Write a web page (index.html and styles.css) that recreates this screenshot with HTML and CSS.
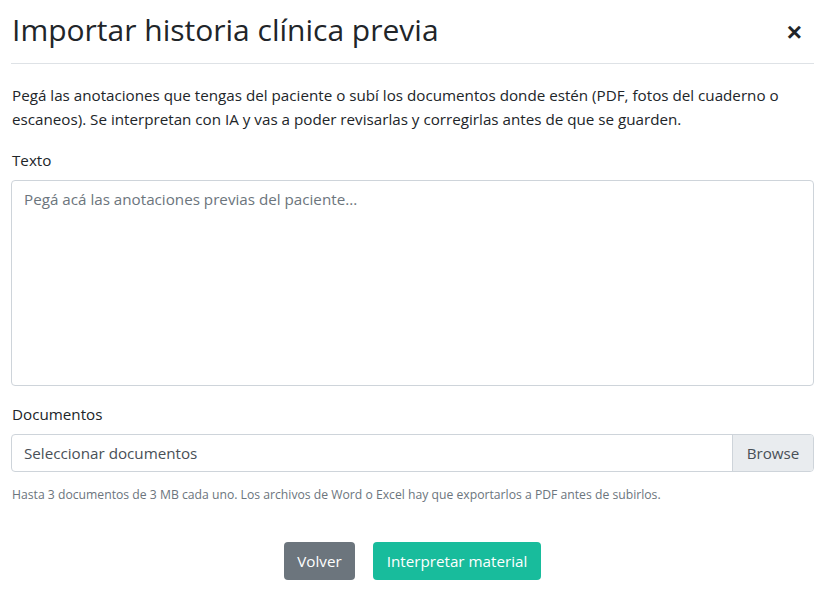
FILE: index.html
```html
<!DOCTYPE html>
<html lang="es">
<head>
<meta charset="utf-8">
<title>Importar historia clínica previa</title>
<link rel="stylesheet" href="styles.css">
</head>
<body>
<div class="modal">
  <div class="modal-header">
    <h3 class="modal-title">Importar historia clínica previa</h3>
    <button class="close" type="button" aria-label="Cerrar">×</button>
  </div>
  <div class="modal-body">
    <p class="intro">Pegá las anotaciones que tengas del paciente o subí los documentos donde estén (PDF, fotos del cuaderno o escaneos). Se interpretan con IA y vas a poder revisarlas y corregirlas antes de que se guarden.</p>
    <div class="field">
      <label class="label">Texto</label>
      <textarea class="textarea" placeholder="Pegá acá las anotaciones previas del paciente..."></textarea>
    </div>
    <div class="field">
      <label class="label">Documentos</label>
      <div class="file">
        <span class="file-text">Seleccionar documentos</span>
        <span class="file-btn">Browse</span>
      </div>
      <small class="help">Hasta 3 documentos de 3 MB cada uno. Los archivos de Word o Excel hay que exportarlos a PDF antes de subirlos.</small>
    </div>
    <div class="actions">
      <button class="btn btn-secondary" type="button">Volver</button>
      <button class="btn btn-primary" type="button">Interpretar material</button>
    </div>
  </div>
</div>
</body>
</html>
```
FILE: styles.css
```css
* { box-sizing: border-box; }
html, body { margin: 0; padding: 0; background: #fff; }
body {
  font-family: "Open Sans", "Noto Sans", sans-serif;
  font-size: 15.2px;
  color: #212529;
}
.modal { padding: 0 14px 0 11px; }
.modal-header {
  display: flex;
  align-items: center;
  justify-content: space-between;
  height: 64px;
  border-bottom: 1px solid #dee2e6;
}
.modal-title {
  margin: 0;
  font-size: 30px;
  font-weight: 400;
  line-height: 1.2;
  padding-left: 1px;
  position: relative;
  top: -2px;
}
.close {
  border: 0;
  background: none;
  font-size: 26px;
  font-weight: 700;
  color: #212529;
  padding: 0 12px 0 0;
  line-height: 1;
  font-family: "Liberation Sans", sans-serif;
  cursor: pointer;
}
.modal-body { padding-top: 19px; }
.intro { margin: 0 0 17px; line-height: 24px; padding-left: 1px; }
.field { margin-bottom: 16px; }
.label { display: block; margin-bottom: 8px; line-height: 24px; padding-left: 1px; }
.textarea {
  display: block;
  width: 100%;
  height: 206px;
  resize: none;
  border: 1px solid #ced4da;
  border-radius: 4px;
  padding: 6px 12px;
  font: inherit;
  line-height: 24px;
  color: #495057;
  margin-bottom: 16px;
}
.textarea::placeholder { color: #6c757d; opacity: 1; }
.file {
  display: flex;
  height: 38px;
  border: 1px solid #ced4da;
  border-radius: 4px;
  overflow: hidden;
  color: #495057;
}
.file-text { flex: 1; padding: 6px 12px; line-height: 24px; }
.file-btn {
  padding: 6px 12px;
  line-height: 24px;
  background: #e9ecef;
  border-left: 1px solid #ced4da;
  width: 81px;
  text-align: center;
}
.help {
  display: block;
  margin-top: 13px;
  font-size: 12.2px;
  line-height: 20px;
  color: #6c757d;
  padding-left: 1px;
}
.actions {
  display: flex;
  justify-content: center;
  gap: 18px;
  margin-top: 37px;
}
.btn {
  height: 38px;
  border: 0;
  border-radius: 4px;
  padding: 0 13px;
  font: inherit;
  color: #fff;
}
.btn-secondary { background: #6c757d; width: 71px; padding: 0; }
.btn-primary { background: #18bc9c; width: 168px; padding: 0; }
```
